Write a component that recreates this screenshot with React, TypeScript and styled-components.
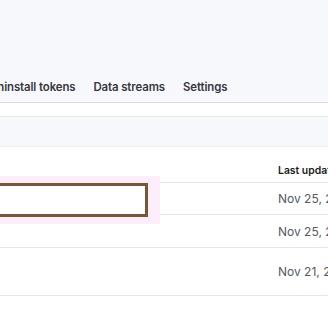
import React from "react";
import styled, { createGlobalStyle } from "styled-components";

const Global = createGlobalStyle`
  html, body { margin: 0; padding: 0; background: #f7f8fc; }
  body { font-family: Inter, "Noto Sans", sans-serif; -webkit-font-smoothing: antialiased; }
`;

const Page = styled.div`
  width: 328px;
  height: 320px;
  overflow: hidden;
  position: relative;
  background: #f7f8fc;
`;

const Header = styled.div`
  padding-top: 75px;
  border-bottom: 1px solid #d9dee6;
`;

const Tabs = styled.div`
  display: flex;
  gap: 18px;
  margin-left: -11px;
  height: 27px;
  align-items: center;
`;

const Tab = styled.div`
  font-size: 11.4px;
  font-weight: 600;
  letter-spacing: -0.1px;
  color: #343741;
  white-space: nowrap;
  line-height: 1;
  padding-bottom: 1px;
`;

const Strip = styled.div`
  height: 13px;
  background: #ffffff;
  border-bottom: 1px solid #e6e9ef;
`;

const Spacer = styled.div`
  height: 29px;
`;

const Table = styled.div`
  background: #ffffff;
  border-top: 1px solid #eef0f4;
  height: 200px;
`;

const Row = styled.div<{ $h: number; $head?: boolean }>`
  height: ${(p) => p.$h}px;
  display: flex;
  align-items: ${(p) => (p.$head ? "flex-end" : "center")};
  padding-left: 278px;
  padding-bottom: ${(p) => (p.$head ? 5 : 0)}px;
  border-bottom: 1px solid #e4e7ec;
  box-sizing: content-box;
`;

const HeadCell = styled.div`
  font-size: 10.4px;
  font-weight: 600;
  color: #1a1c21;
  white-space: nowrap;
`;

const Cell = styled.div`
  font-size: 12px;
  color: #535966;
  white-space: nowrap;
`;

const Glow = styled.div`
  position: absolute;
  left: 0;
  top: 176px;
  width: 160px;
  height: 48px;
  background: #fdeefb;
`;

const Focus = styled.div`
  position: absolute;
  left: -3px;
  top: 183px;
  width: 145px;
  height: 28px;
  border: 3px solid #7a5634;
  background: #ffffff;
`;

export default function App() {
  return (
    <Page>
      <Global />
      <Header>
        <Tabs>
          <Tab>Uninstall tokens</Tab>
          <Tab>Data streams</Tab>
          <Tab>Settings</Tab>
        </Tabs>
      </Header>
      <Strip />
      <Spacer />
      <Table>
        <Row $h={30} $head>
          <HeadCell>Last updated</HeadCell>
        </Row>
        <Row $h={31}>
          <Cell>Nov 25, 2024</Cell>
        </Row>
        <Row $h={32}>
          <Cell>Nov 25, 2024</Cell>
        </Row>
        <Row $h={47}>
          <Cell>Nov 21, 2024</Cell>
        </Row>
      </Table>
      <Glow />
      <Focus />
    </Page>
  );
}
